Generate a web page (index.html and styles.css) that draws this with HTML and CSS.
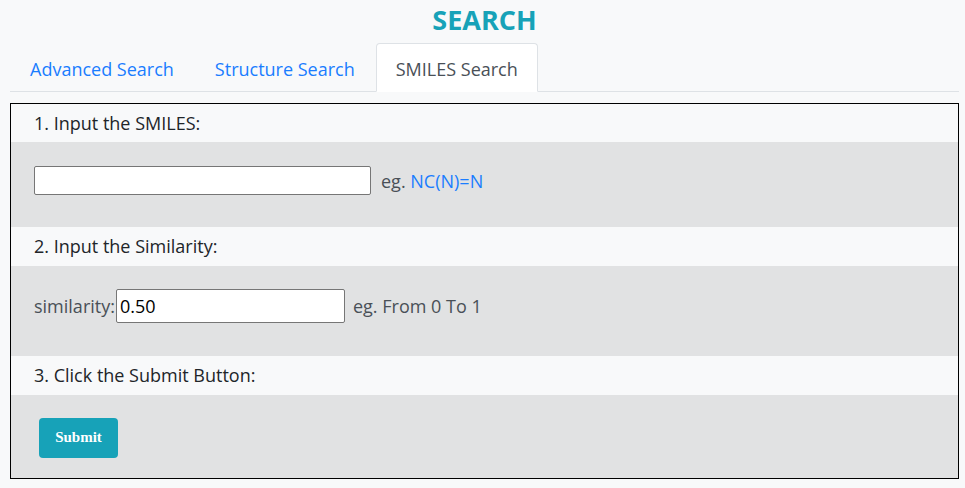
FILE: index.html
```html
<!DOCTYPE html>
<html lang="en">
<head>
    <meta charset="UTF-8">
    <meta name="viewport" content="width=device-width, initial-scale=1.0">
    <title>Search</title>
    <link rel="stylesheet" href="styles.css">
</head>
<body>
    <h2 class="title">SEARCH</h2>
    <ul class="nav-tabs">
        <li class="tab"><a href="#">Advanced Search</a></li>
        <li class="tab"><a href="#">Structure Search</a></li>
        <li class="tab active"><a href="#">SMILES Search</a></li>
    </ul>
    <div class="panel">
        <div class="step-head">1. Input the SMILES:</div>
        <div class="step-body">
            <input type="text" class="smiles-input">
            <span class="hint">eg. <a href="#">NC(N)=N</a></span>
        </div>
        <div class="step-head">2. Input the Similarity:</div>
        <div class="step-body sim-row">
            <label class="field-label">similarity:</label><input type="text" class="sim-input" value="0.50">
            <span class="hint">eg. From 0 To 1</span>
        </div>
        <div class="step-head">3. Click the Submit Button:</div>
        <div class="step-body submit-row">
            <button class="submit-btn">Submit</button>
        </div>
    </div>
</body>
</html>
```

FILE: styles.css
```css
body {
    font-family: 'Open Sans', sans-serif;
    margin: 0;
    padding: 0 6px 0 10px;
    background: #f8f9fa;
    color: #212529;
}
.title {
    margin: 0;
    padding-top: 1px;
    height: 42px;
    text-align: center;
    color: #17a2b8;
    font-size: 27px;
    font-weight: bold;
}
.nav-tabs {
    display: flex;
    list-style: none;
    margin: 0;
    padding: 0;
    border-bottom: 1px solid #dee2e6;
}
.tab {
    margin-right: 1px;
    margin-bottom: -1px;
}
.tab a {
    display: block;
    height: 47px;
    line-height: 50px;
    padding: 0 19px;
    font-size: 18px;
    color: #1a7dff;
    text-decoration: none;
    border: 1px solid transparent;
    border-radius: 4px 4px 0 0;
}
.tab.active a {
    color: #495057;
    background: #fff;
    border-color: #dee2e6 #dee2e6 #fff;
}
.panel {
    margin-top: 11px;
    border: 1px solid #000;
}
.step-head {
    height: 38px;
    line-height: 38px;
    padding-left: 23px;
    font-size: 18px;
    background: #f8f9fa;
}
.step-body {
    display: flex;
    align-items: center;
    height: 85px;
    box-sizing: border-box;
    padding: 0 23px 8px;
    background: #e1e2e3;
    font-size: 18px;
}
.step-body + .step-head {
    height: 39px;
    line-height: 39px;
}
.smiles-input {
    width: 337px;
    height: 29px;
    box-sizing: border-box;
    border: 1px solid #767676;
    border-radius: 2px;
    background: #fff;
}
.sim-row {
    height: 90px;
    padding-bottom: 10px;
}
.sim-input {
    width: 229px;
    height: 34px;
    box-sizing: border-box;
    margin: 0 0 0 1px;
    padding: 0 3px;
    border: 1px solid #767676;
    border-radius: 2px;
    font-family: 'Open Sans', sans-serif;
    font-size: 18px;
    color: #000;
}
.field-label {
    color: #495057;
}
.hint {
    margin-left: 10px;
    color: #495057;
}
.sim-input + .hint {
    margin-left: 8px;
}
.hint a {
    color: #1a7dff;
    text-decoration: none;
}
.submit-row {
    height: 83px;
    padding: 0 28px;
}
.submit-btn {
    width: 79px;
    height: 40px;
    margin-top: 2px;
    background: #17a2b8;
    color: #fff;
    border: none;
    border-radius: 4px;
    font-family: 'Liberation Serif', serif;
    font-weight: bold;
    font-size: 15px;
    cursor: pointer;
}
```
